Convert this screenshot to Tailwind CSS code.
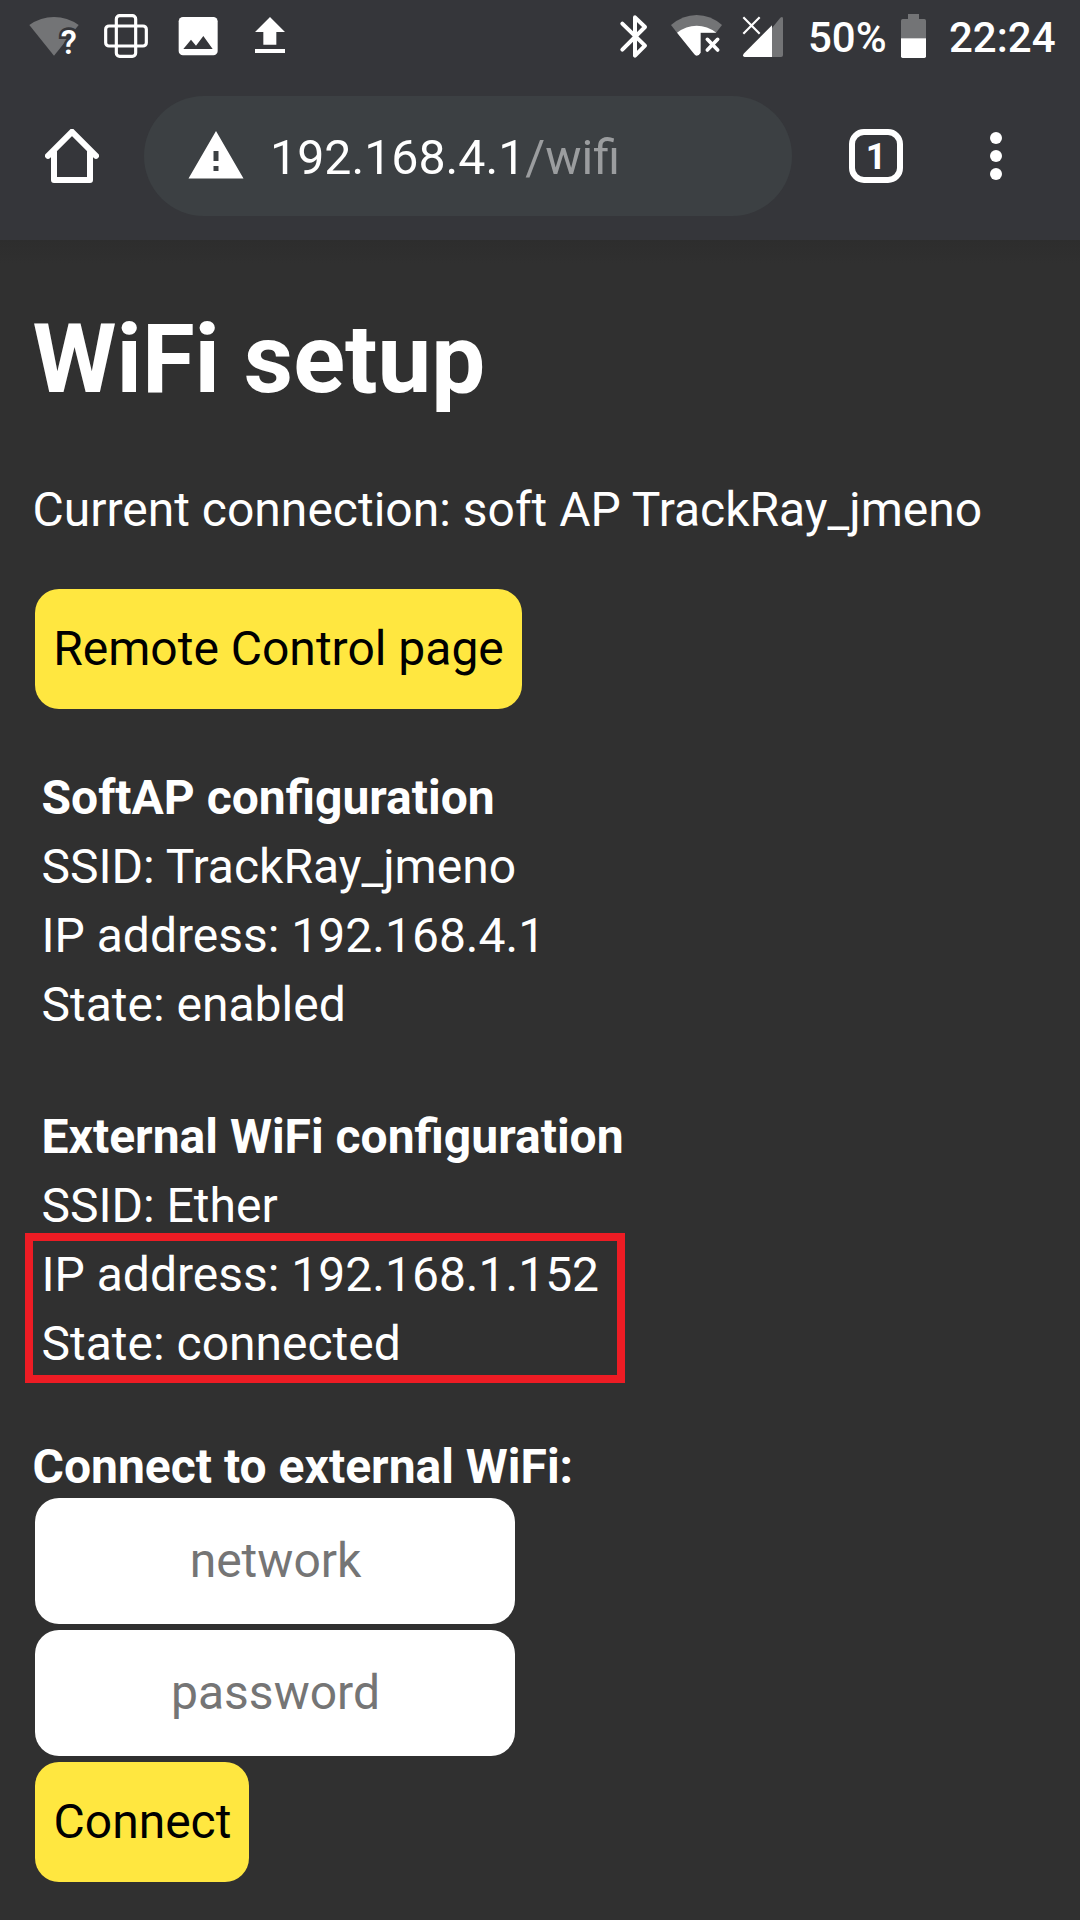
<!DOCTYPE html>
<html lang="en">
<head>
<meta charset="utf-8">
<title>WiFi setup</title>
<script src="https://cdn.jsdelivr.net/npm/@tailwindcss/browser@4"></script>
</head>
<body class="bg-[#303030] text-white font-['Roboto',sans-serif] text-[48px] leading-[57px] w-[1080px] h-[1920px] overflow-hidden">
<header class="bg-[#35363a] h-[240px]">
  <!-- Status bar -->
  <div class="h-20 flex justify-between">
    <div class="flex pl-6">
      <svg class="w-[60px] h-20" viewBox="72 0 180 240">
        <path d="M88 75Q122 51 162 51Q202 51 236 75L162 167Z" fill="#737476"/>
        <text x="182" y="162" font-size="98" font-weight="600" fill="#fff" stroke="#35363a" stroke-width="16" paint-order="stroke">?</text>
      </svg>
      <svg class="w-[72px] h-20" viewBox="252 0 216 240" fill="none" stroke="#fff" stroke-width="9.5">
        <rect x="349" y="47" width="58" height="122" rx="10"/>
        <rect x="317" y="78" width="122" height="60" rx="10"/>
      </svg>
      <svg class="w-[88px] h-20" viewBox="468 0 264 240">
        <rect x="536" y="51" width="117" height="115" rx="13" fill="#fff"/>
        <path d="M550 147L573 119L588 137L610 108L638 147Z" fill="#35363a"/>
      </svg>
      <svg class="w-14 h-20" viewBox="732 0 168 240" fill="#fff">
        <path d="M810 51L855 96H829V134H790V96H765ZM765 147H855V159H765Z"/>
      </svg>
    </div>
    <div class="flex w-[480px]">
      <svg class="w-[60px] h-20" viewBox="0 0 180 240" fill="none" stroke="#fff" stroke-width="12" stroke-linecap="round" stroke-linejoin="round">
        <path d="M67 71L135 137L105 167V52L135 81L67 149"/>
      </svg>
      <svg class="w-[74px] h-20" viewBox="180 0 222 240">
        <path d="M213 75Q248 45 290 45Q332 45 366 75L348 98H231Z" fill="#737476"/>
        <path d="M231 98Q258 77 290 77Q322 77 349 98H302V158Q297 167 290 167Q286 167 283 163Z" fill="#fff"/>
        <path d="M322 118L353 150M353 118L322 150" stroke="#fff" stroke-width="11" stroke-linecap="round"/>
      </svg>
      <svg class="w-[60px] h-20" viewBox="402 0 180 240">
        <path d="M516 84L541 53Q549 48 549 56V165Q549 171 543 171H516Z" fill="#737476"/>
        <path d="M516 76V171H434Q426 170 431 161Z" fill="#fff"/>
        <path d="M430 52L479 101M479 52L430 101" stroke="#fff" stroke-width="6.5"/>
      </svg>
      <span class="w-[104px] pl-[14px] pt-[11px] text-[42px] leading-[54px] font-medium">50%</span>
      <svg class="w-[36px] h-20" viewBox="894 0 108 240">
        <path d="M924 42H957V57H973Q978 57 978 62V115H903V62Q903 57 908 57H924Z" fill="#737476"/>
        <path d="M903 115H978V169Q978 174 973 174H908Q903 174 903 169Z" fill="#fff"/>
      </svg>
      <span class="pl-[15px] pt-[11px] text-[42px] leading-[54px] font-medium">22:24</span>
    </div>
  </div>
  <!-- Browser toolbar -->
  <div class="flex items-center h-[120px] mt-4">
    <svg class="w-[54px] h-[54px] ml-[45px]" viewBox="45 129 54 54" fill="none" stroke="#fff" stroke-width="6" stroke-linecap="round" stroke-linejoin="round">
      <path d="M48 155.8L72 131.8L96 155.8"/>
      <path d="M54 152V180H90V152"/>
    </svg>
    <div class="flex items-center w-[648px] h-[120px] ml-[45px] pl-[41.5px] rounded-full bg-[#3c4043]">
      <svg class="w-[60px] h-[60px] -mt-px" viewBox="0 0 24 24" fill="#fff"><path d="M1 21h22L12 2 1 21zm12-3h-2v-2h2v2zm0-4h-2v-4h2v4z"/></svg>
      <span class="ml-[24.5px] mt-[3px] text-[48.3px]">192.168.4.1<span class="text-[#9b9d9f]">/wifi</span></span>
    </div>
    <div class="flex items-center justify-center w-[54px] h-[54px] pt-0.5 ml-[57px] border-6 border-white rounded-[15px] text-[36px] font-bold leading-none">1</div>
    <svg class="w-3 h-[54px] ml-[87px]" viewBox="0 0 12 54" fill="#fff"><circle cx="6" cy="9" r="6"/><circle cx="6" cy="27" r="6"/><circle cx="6" cy="45" r="6"/></svg>
  </div>
</header>
<div class="h-6 bg-linear-to-b from-[#2d2d2d] to-[#303030]"></div>
<main class="px-[32.5px] pt-[39px]">
  <h1 class="text-[96px] leading-[112px] font-bold">WiFi setup</h1>
  <p class="mt-[66px] whitespace-nowrap">Current connection: soft AP TrackRay_jmeno</p>
  <button class="block mt-[51px] ml-[2.5px] w-[487px] h-[120px] pt-[31px] pb-8 rounded-3xl bg-[#ffe740] text-black whitespace-nowrap">Remote Control page</button>
  <section class="mt-[54px] ml-[9px] leading-[69px]">
    <h2 class="font-bold">SoftAP configuration</h2>
    <p>SSID: TrackRay_jmeno</p>
    <p>IP address: 192.168.4.1</p>
    <p>State: enabled</p>
  </section>
  <section class="mt-[63px] ml-[9px] leading-[69px]">
    <h2 class="font-bold">External WiFi configuration</h2>
    <p>SSID: Ether</p>
    <div class="relative">
      <div class="absolute -left-[16.5px] -top-[7px] w-[600px] h-[150px] border-8 border-[#ed1c24]"></div>
      <p>IP address: 192.168.1.152</p>
      <p>State: connected</p>
    </div>
  </section>
  <form class="mt-[60px]">
    <h2 class="font-bold">Connect to external WiFi:</h2>
    <div class="flex flex-col items-start gap-1.5 mt-[3px] ml-[2.5px]">
      <input class="w-[480px] h-[126px] pt-[34px] pb-[35px] pl-px rounded-3xl bg-white text-center placeholder:text-[#757575]" placeholder="network">
      <input class="w-[480px] h-[126px] pt-[34px] pb-[35px] pl-px rounded-3xl bg-white text-center placeholder:text-[#757575]" placeholder="password">
      <button type="button" class="w-[214px] h-[120px] pt-[31px] pb-8 pl-px rounded-3xl bg-[#ffe740] text-black">Connect</button>
    </div>
  </form>
</main>
</body>
</html>
